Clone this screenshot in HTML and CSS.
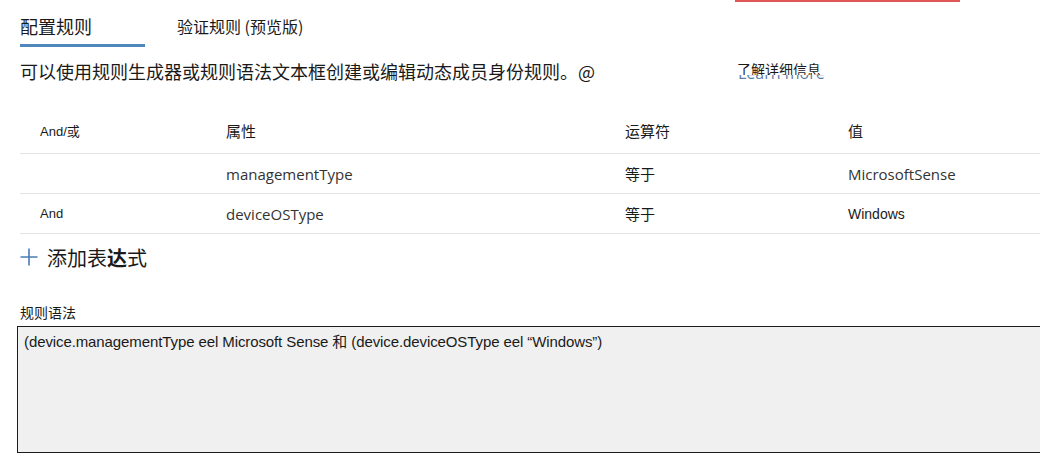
FILE: index.html
```html
<!DOCTYPE html>
<html lang="zh-CN">
<head>
<meta charset="utf-8">
<link rel="stylesheet" href="styles.css">
</head>
<body>
<div class="page">
  <div class="topstrip"><span class="redmark"></span></div>
  <div class="tabs">
    <div class="tab active">配置规则</div>
    <div class="tab">验证规则 (预览版)</div>
  </div>
  <div class="desc">
    <span class="desc-text">可以使用规则生成器或规则语法文本框创建或编辑动态成员身份规则。@</span>
    <span class="learn">
      <span class="learn-en">Learn more</span>
      <span class="learn-zh">了解详细信息</span>
    </span>
  </div>
  <div class="rules">
    <div class="row head">
      <div class="c1 small">And/或</div>
      <div class="c2">属性</div>
      <div class="c3">运算符</div>
      <div class="c4">值</div>
    </div>
    <div class="row">
      <div class="c1 small"></div>
      <div class="c2 val">managementType</div>
      <div class="c3">等于</div>
      <div class="c4 val">MicrosoftSense</div>
    </div>
    <div class="row">
      <div class="c1 small">And</div>
      <div class="c2 val">deviceOSType</div>
      <div class="c3">等于</div>
      <div class="c4 small win">Windows</div>
    </div>
  </div>
  <div class="add">
    <svg class="plus" width="18" height="18" viewBox="0 0 18 18"><path d="M9 0.5V17.5M0.5 9H17.5" stroke="#4a7cb6" stroke-width="1.6" fill="none"/></svg>
    <span class="add-text">添加表<b>达</b>式</span>
  </div>
  <div class="syntax-label">规则语法</div>
  <div class="syntax-box">(device.managementType eel Microsoft Sense 和 (device.deviceOSType eel “Windows”)</div>
</div>
</body>
</html>
```
FILE: styles.css
```css
html, body {
  margin: 0;
  padding: 0;
  background: #ffffff;
  overflow: hidden;
}
body {
  width: 1040px;
  height: 468px;
  font-family: "Noto Sans CJK SC", "Liberation Sans", sans-serif;
  color: #1a1a1a;
}
.page {
  padding-left: 20px;
}
.topstrip {
  height: 2px;
  display: flex;
}
.redmark {
  margin-left: 715px;
  width: 225px;
  height: 2px;
  background: #d9383a;
  opacity: 0.85;
}
.tabs {
  display: flex;
  margin-top: 10px;
  align-items: flex-start;
}
.tab {
  font-size: 16px;
  line-height: 26px;
}
.tab.active {
  font-size: 18px;
  width: 125px;
  height: 32px;
  border-bottom: 3px solid #4f87ba;
  line-height: 28px;
}
.tab + .tab {
  margin-left: 32px;
  margin-top: 1px;
}
.desc {
  display: flex;
  margin-top: 11px;
  height: 26px;
  align-items: flex-start;
}
.desc-text {
  font-size: 18px;
  line-height: 26px;
  width: 717px;
}
.learn {
  position: relative;
  margin-top: 2px;
  width: 90px;
}
.learn-zh {
  position: relative;
  display: block;
  background: #fff;
  font-size: 14px;
  line-height: 18px;
  height: 15px;
  overflow: hidden;
}
.learn-en {
  position: absolute;
  left: 1px;
  top: 3px;
  font-family: "Open Sans", "Liberation Sans", sans-serif;
  font-size: 16px;
  line-height: 20px;
  color: #5d80a8;
  white-space: nowrap;
}
.rules {
  margin-top: 26px;
}
.row {
  display: grid;
  grid-template-columns: 206px 399px 223px 1fr;
  height: 39px;
  align-items: center;
  border-bottom: 1px solid #e3e3e3;
}
.row.head {
  height: 44px;
  padding-bottom: 3px;
  box-sizing: border-box;
  height: 44px;
}
.c1 {
  padding-left: 20px;
}
.c2, .c3, .c4 {
  font-size: 15px;
}
.small {
  font-family: "Liberation Sans", "Noto Sans CJK SC", sans-serif;
  font-size: 13px;
}
.small.win {
  font-size: 14px;
}
.val {
  font-family: "Open Sans", "Noto Sans CJK SC", sans-serif;
  font-size: 15px;
  color: #333;
}
.add {
  display: flex;
  align-items: center;
  height: 44px;
  margin-top: 1px;
}
.plus {
  display: block;
}
.add-text {
  margin-left: 9px;
  font-size: 20px;
}
.add-text b {
  font-weight: 700;
}
.syntax-label {
  margin-top: 23px;
  font-size: 14px;
  line-height: 20px;
}
.syntax-box {
  margin-top: 4px;
  margin-left: -3px;
  width: 1100px;
  height: 127px;
  border: 1px solid #1c1c1c;
  background: #f0f0f0;
  font-family: "Liberation Sans", "Noto Sans CJK SC", sans-serif;
  font-size: 15px;
  letter-spacing: -0.1px;
  padding: 3px 6px;
  box-sizing: border-box;
}
```
